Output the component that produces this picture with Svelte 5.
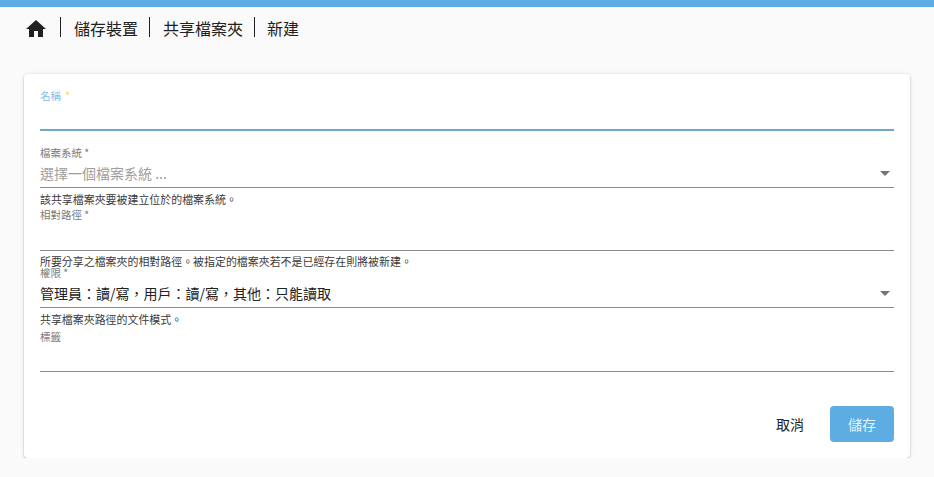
<script lang="ts">
  type Crumb = { label: string };

  const crumbs: Crumb[] = [
    { label: "儲存裝置" },
    { label: "共享檔案夾" },
    { label: "新建" },
  ];

  let name = $state("");
  let path = $state("");
  let tags = $state("");
</script>

<div class="topbar"></div>

<nav class="breadcrumb">
  <a class="home" href="#home" aria-label="home">
    <svg viewBox="0 0 24 24" width="24" height="24" aria-hidden="true">
      <path d="M10 20v-6h4v6h5v-8h3L12 3 2 12h3v8z" />
    </svg>
  </a>
  {#each crumbs as crumb (crumb.label)}
    <span class="crumb">{crumb.label}</span>
  {/each}
</nav>

<main class="page">
  <form class="card">
    <div class="field first">
      <label class="label focused" for="name">名稱 <span class="req">*</span></label>
      <div class="control focused-line">
        <input id="name" bind:value={name} />
      </div>
    </div>

    <div class="field second">
      <span class="label">檔案系統 *</span>
      <div class="control select">
        <span class="placeholder">選擇一個檔案系統 ...</span>
        <span class="arrow"></span>
      </div>
      <p class="hint">該共享檔案夾要被建立位於的檔案系統。</p>
    </div>

    <div class="field third">
      <label class="label" for="path">相對路徑 *</label>
      <div class="control tall">
        <input id="path" bind:value={path} />
      </div>
      <p class="hint">所要分享之檔案夾的相對路徑。被指定的檔案夾若不是已經存在則將被新建。</p>
    </div>

    <div class="field fourth">
      <span class="label">權限 *</span>
      <div class="control select">
        <span class="value">管理員：讀/寫，用戶：讀/寫，其他：只能讀取</span>
        <span class="arrow"></span>
      </div>
      <p class="hint">共享檔案夾路徑的文件模式。</p>
    </div>

    <div class="field">
      <label class="label" for="tags">標籤</label>
      <div class="control">
        <input id="tags" bind:value={tags} />
      </div>
    </div>

    <div class="actions">
      <button type="button" class="cancel">取消</button>
      <button type="button" class="save">儲存</button>
    </div>
  </form>
</main>

<style>
  :global(body) {
    background: #fafafa;
    font-family: "Noto Sans CJK TC", "Noto Sans", sans-serif;
    color: #212121;
  }

  .topbar {
    height: 7px;
    background: #5dade2;
  }

  .breadcrumb {
    display: flex;
    align-items: center;
    height: 20px;
    padding: 10px 0 0 24px;
  }

  .home {
    display: flex;
    margin: 4px 12px 0 0;
  }

  .home svg {
    fill: #212121;
  }

  .crumb {
    border-left: 1px solid #212121;
    padding: 0 11px 0 13px;
    height: 20px;
    font-size: 16px;
    line-height: 23px;
  }

  .crumb:last-child {
    padding-left: 12px;
  }

  .page {
    padding: 37px 24px 0;
  }

  .card {
    display: flex;
    flex-direction: column;
    height: 384px;
    box-sizing: border-box;
    padding: 16px;
    background: #fff;
    border-radius: 4px;
    box-shadow:
      0 1px 2px rgba(0, 0, 0, 0.28),
      0 0 4px rgba(0, 0, 0, 0.08);
  }

  .field {
    display: flex;
    flex-direction: column;
  }

  .first {
    margin-bottom: 16px;
  }

  .second {
    margin-bottom: 4px;
  }

  .fourth {
    margin-bottom: 6px;
  }

  .label {
    height: 12px;
    font-size: 10.5px;
    line-height: 12px;
    color: #7a7a7a;
  }

  .label.focused {
    color: #7fbce8;
  }

  .req {
    margin-left: 2px;
    color: #f2d45c;
  }

  .control {
    display: flex;
    align-items: center;
    height: 29px;
    box-sizing: border-box;
    border-bottom: 1px solid #8c8c8c;
  }

  .control.tall {
    height: 30px;
  }

  .control.focused-line {
    border-bottom: 2px solid #6fa8c9;
  }

  .control input {
    width: 100%;
    border: 0;
    outline: 0;
    padding: 0;
    background: transparent;
    font: inherit;
    font-size: 14px;
  }

  .select {
    justify-content: space-between;
    font-size: 14px;
  }

  .placeholder {
    color: #9e9e9e;
  }

  .arrow {
    width: 0;
    height: 0;
    margin-right: 4px;
    border-left: 5px solid transparent;
    border-right: 5px solid transparent;
    border-top: 5px solid #757575;
  }

  .hint {
    margin: 5px 0 0;
    height: 12px;
    font-size: 10.95px;
    line-height: 12px;
    color: #3a3a3a;
  }

  .third .hint {
    margin-top: 4px;
  }

  .actions {
    display: flex;
    justify-content: flex-end;
    align-items: center;
    gap: 14px;
    margin-top: 34px;
  }

  .actions button {
    height: 36px;
    min-width: 52px;
    border: 0;
    border-radius: 4px;
    font: inherit;
    font-size: 14px;
    background: transparent;
    color: #212121;
  }

  .actions .save {
    width: 64px;
    background: #5dade2;
    color: #e6f3fb;
  }
</style>
